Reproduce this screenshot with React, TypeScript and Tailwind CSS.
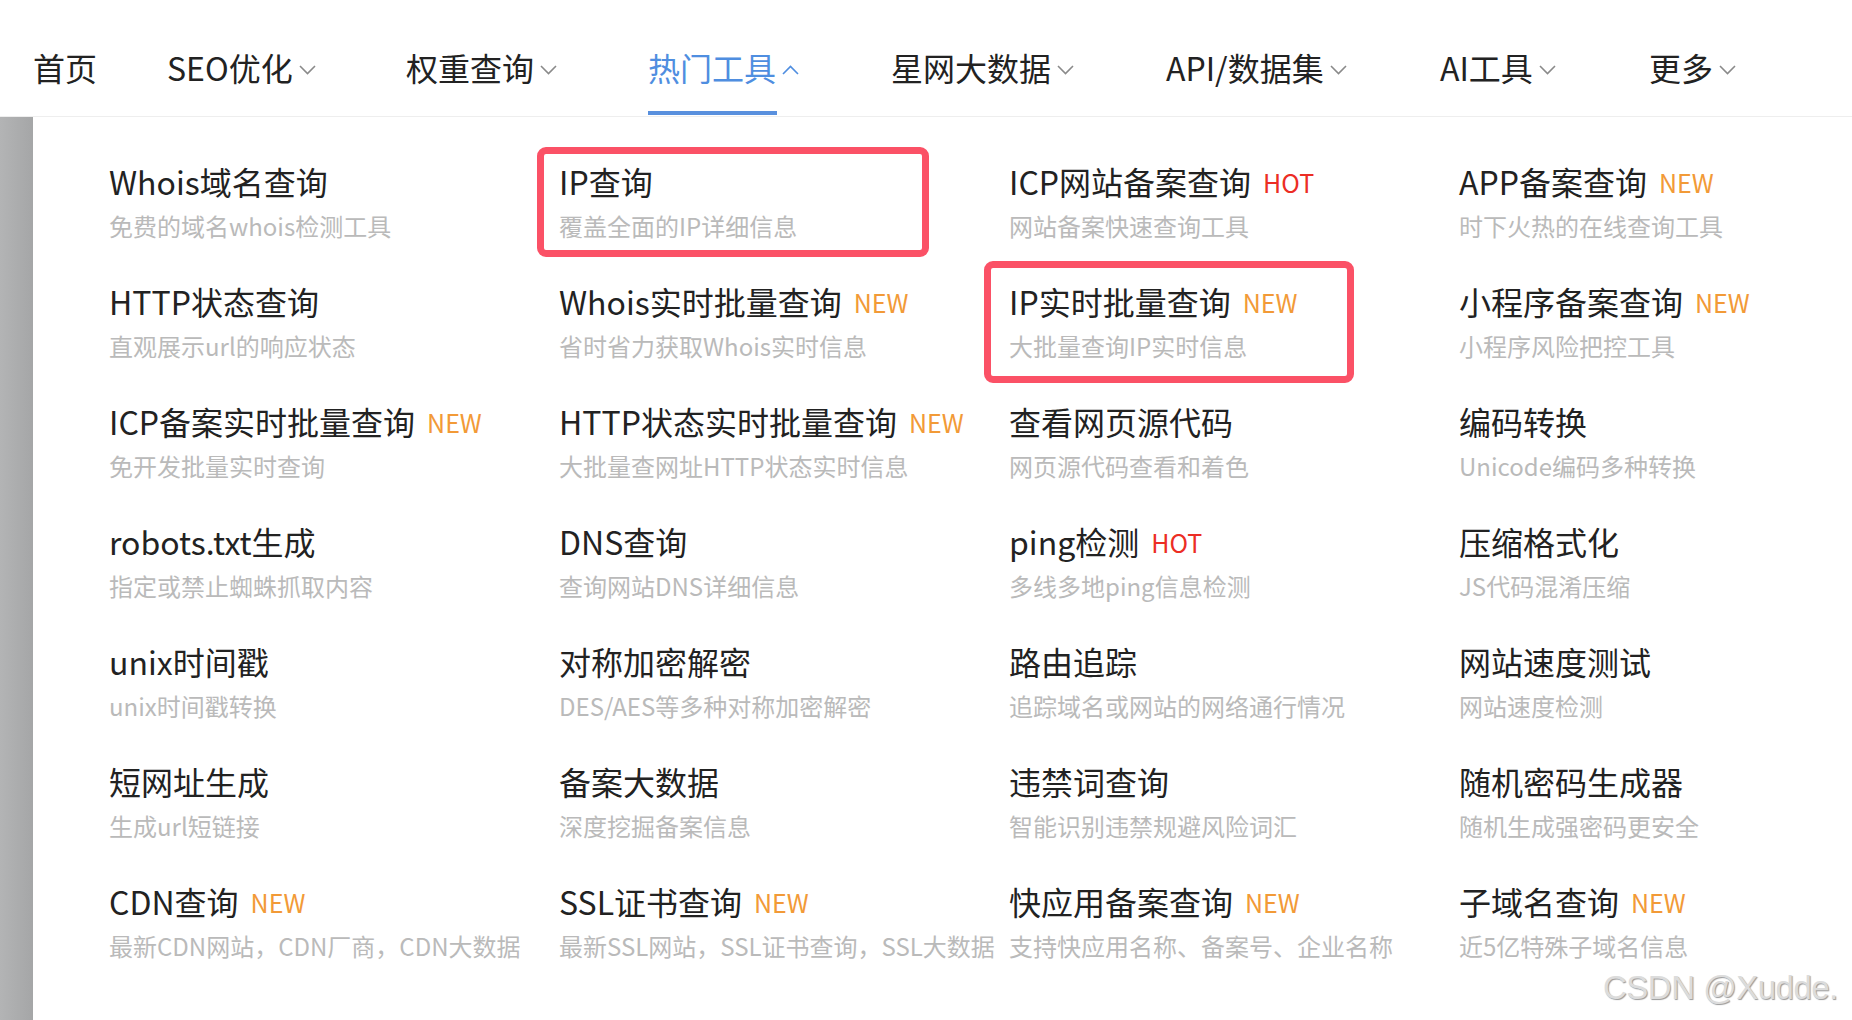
import React from "react";

type Tool = { title: string; desc: string; tag?: "NEW" | "HOT" };

const navItems = [
  { label: "首页", w: "w-[134px]", arrow: false },
  { label: "SEO优化", w: "w-[239px]", arrow: true },
  { label: "权重查询", w: "w-[242px]", arrow: true },
  { label: "热门工具", w: "w-[243px]", arrow: true, active: true },
  { label: "星网大数据", w: "w-[275px]", arrow: true },
  { label: "API/数据集", w: "w-[274px]", arrow: true },
  { label: "AI工具", w: "w-[209px]", arrow: true },
  { label: "更多", w: "w-[120px]", arrow: true },
];

const tools: Tool[] = [
  { title: "Whois域名查询", desc: "免费的域名whois检测工具" },
  { title: "IP查询", desc: "覆盖全面的IP详细信息" },
  { title: "ICP网站备案查询", desc: "网站备案快速查询工具", tag: "HOT" },
  { title: "APP备案查询", desc: "时下火热的在线查询工具", tag: "NEW" },

  { title: "HTTP状态查询", desc: "直观展示url的响应状态" },
  { title: "Whois实时批量查询", desc: "省时省力获取Whois实时信息", tag: "NEW" },
  { title: "IP实时批量查询", desc: "大批量查询IP实时信息", tag: "NEW" },
  { title: "小程序备案查询", desc: "小程序风险把控工具", tag: "NEW" },

  { title: "ICP备案实时批量查询", desc: "免开发批量实时查询", tag: "NEW" },
  { title: "HTTP状态实时批量查询", desc: "大批量查网址HTTP状态实时信息", tag: "NEW" },
  { title: "查看网页源代码", desc: "网页源代码查看和着色" },
  { title: "编码转换", desc: "Unicode编码多种转换" },

  { title: "robots.txt生成", desc: "指定或禁止蜘蛛抓取内容" },
  { title: "DNS查询", desc: "查询网站DNS详细信息" },
  { title: "ping检测", desc: "多线多地ping信息检测", tag: "HOT" },
  { title: "压缩格式化", desc: "JS代码混淆压缩" },

  { title: "unix时间戳", desc: "unix时间戳转换" },
  { title: "对称加密解密", desc: "DES/AES等多种对称加密解密" },
  { title: "路由追踪", desc: "追踪域名或网站的网络通行情况" },
  { title: "网站速度测试", desc: "网站速度检测" },

  { title: "短网址生成", desc: "生成url短链接" },
  { title: "备案大数据", desc: "深度挖掘备案信息" },
  { title: "违禁词查询", desc: "智能识别违禁规避风险词汇" },
  { title: "随机密码生成器", desc: "随机生成强密码更安全" },

  { title: "CDN查询", desc: "最新CDN网站，CDN厂商，CDN大数据", tag: "NEW" },
  { title: "SSL证书查询", desc: "最新SSL网站，SSL证书查询，SSL大数据", tag: "NEW" },
  { title: "快应用备案查询", desc: "支持快应用名称、备案号、企业名称", tag: "NEW" },
  { title: "子域名查询", desc: "近5亿特殊子域名信息", tag: "NEW" },
];

const Chevron = ({ up, active }: { up?: boolean; active?: boolean }) => (
  <svg width="17" height="10" viewBox="0 0 17 10" className="ml-[6px] mt-[6px]">
    <path
      d={up ? "M1 9 L8.5 1.5 L16 9" : "M1 1 L8.5 8.5 L16 1"}
      fill="none"
      stroke={active ? "#4f8ee0" : "#8a8a8a"}
      strokeWidth="1.6"
    />
  </svg>
);

const App: React.FC = () => {
  return (
    <div className="relative w-[1852px] h-[1020px] bg-white overflow-hidden font-['Noto_Sans_CJK_SC','Noto_Sans',sans-serif]">
      {/* top nav */}
      <div className="h-[117px] flex pl-[33px] pt-[47px] border-b border-[#eeeeee]">
        {navItems.map((n) => (
          <div key={n.label} className={`${n.w} shrink-0 flex items-start`}>
            <div className="relative flex items-center h-[40px]">
              <span
                className={`text-[32px] leading-[40px] ${n.active ? "text-[#4f8ee0]" : "text-[#222222]"}`}
              >
                {n.label}
              </span>
              {n.arrow && <Chevron up={n.active} active={n.active} />}
              {n.active && (
                <div className="absolute left-0 top-[64px] w-[129px] h-[4px] bg-[#5990de]" />
              )}
            </div>
          </div>
        ))}
      </div>

      {/* dropdown panel */}
      <div className="flex h-[903px]">
        <div className="w-[33px] shrink-0 bg-gradient-to-r from-[#b3b4b5] to-[#a5a6a7]" />
        <div className="flex-1 min-w-0 bg-white pt-[44px] pl-[76px]">
          <div className="grid grid-cols-[450px_450px_450px_1fr]">
            {tools.map((t) => (
              <div key={t.title} className="h-[120px] flex flex-col whitespace-nowrap">
                <div className="flex items-center h-[40px]">
                  <span className="text-[32px] leading-[40px] text-[#222222]">{t.title}</span>
                  {t.tag && (
                    <span
                      className={`ml-[12px] text-[25px] leading-[32px] mt-[2px] ${
                        t.tag === "NEW" ? "text-[#f29a37]" : "text-[#ec2d24]"
                      }`}
                    >
                      {t.tag}
                    </span>
                  )}
                </div>
                <div className="mt-[9px] text-[24px] leading-[32px] text-[#bababa]">{t.desc}</div>
              </div>
            ))}
          </div>
        </div>
      </div>

      {/* red annotation boxes */}
      <div className="absolute left-[537px] top-[147px] w-[392px] h-[110px] border-[7px] border-[#fb5166] rounded-[9px]" />
      <div className="absolute left-[984px] top-[261px] w-[370px] h-[122px] border-[7px] border-[#fb5166] rounded-[9px]" />

      {/* watermark */}
      <div className="absolute left-[1603px] top-[967px] whitespace-nowrap text-[33px] leading-[42px] tracking-[-0.5px] text-[#dcdcdc] font-['Liberation_Sans',sans-serif] [text-shadow:1px_1px_1px_#9a9a9a]">
        CSDN @Xudde.
      </div>
    </div>
  );
};

export default App;
